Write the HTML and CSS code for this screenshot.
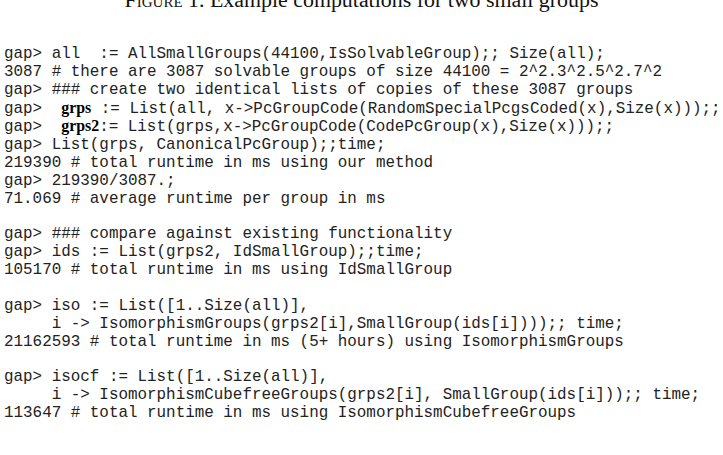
FILE: index.html
```html
<!DOCTYPE html>
<html>
<head>
<meta charset="utf-8">
<link rel="stylesheet" href="styles.css">
</head>
<body>
<div class="page">
<p class="caption"><span class="sc">Figure</span> 1. Example computations for two small groups</p>
<pre class="code">gap&gt; all  := AllSmallGroups(44100,IsSolvableGroup);; Size(all);
3087 # there are 3087 solvable groups of size 44100 = 2^2.3^2.5^2.7^2
gap&gt; ### create two identical lists of copies of these 3087 groups
gap&gt;  <b class="bf">grps</b> := List(all, x-&gt;PcGroupCode(RandomSpecialPcgsCoded(x),Size(x)));;
gap&gt;  <b class="bf">grps2</b>:= List(grps,x-&gt;PcGroupCode(CodePcGroup(x),Size(x)));;
gap&gt; List(grps, CanonicalPcGroup);;time;
219390 # total runtime in ms using our method
gap&gt; 219390/3087.;
71.069 # average runtime per group in ms

gap&gt; ### compare against existing functionality
gap&gt; ids := List(grps2, IdSmallGroup);;time;
105170 # total runtime in ms using IdSmallGroup

gap&gt; iso := List([1..Size(all)],
     i -&gt; IsomorphismGroups(grps2[i],SmallGroup(ids[i])));; time;
21162593 # total runtime in ms (5+ hours) using IsomorphismGroups

gap&gt; isocf := List([1..Size(all)],
     i -&gt; IsomorphismCubefreeGroups(grps2[i], SmallGroup(ids[i]));; time;
113647 # total runtime in ms using IsomorphismCubefreeGroups</pre>
</div>
</body>
</html>
```

FILE: styles.css
```css
html, body {
  margin: 0;
  padding: 0;
  background: #ffffff;
}

.page {
  width: 723px;
  height: 455px;
  overflow: hidden;
}

.caption {
  margin: -12px 0 0 0;
  font-family: "Liberation Serif", "Times New Roman", serif;
  font-size: 21.9px;
  line-height: 24px;
  text-align: center;
  color: #111;
}

.sc {
  font-variant: small-caps;
}

.code {
  margin: 34px 0 0 0;
  padding: 0 0 0 4px;
  font-family: "Liberation Mono", "Courier New", monospace;
  font-size: 15.9px;
  line-height: 17.85px;
  color: #222;
  white-space: pre;
}

.bf {
  font-family: "Liberation Serif", "Times New Roman", serif;
  font-weight: bold;
  font-size: 15.9px;
  line-height: 1;
  color: #000;
}
```
